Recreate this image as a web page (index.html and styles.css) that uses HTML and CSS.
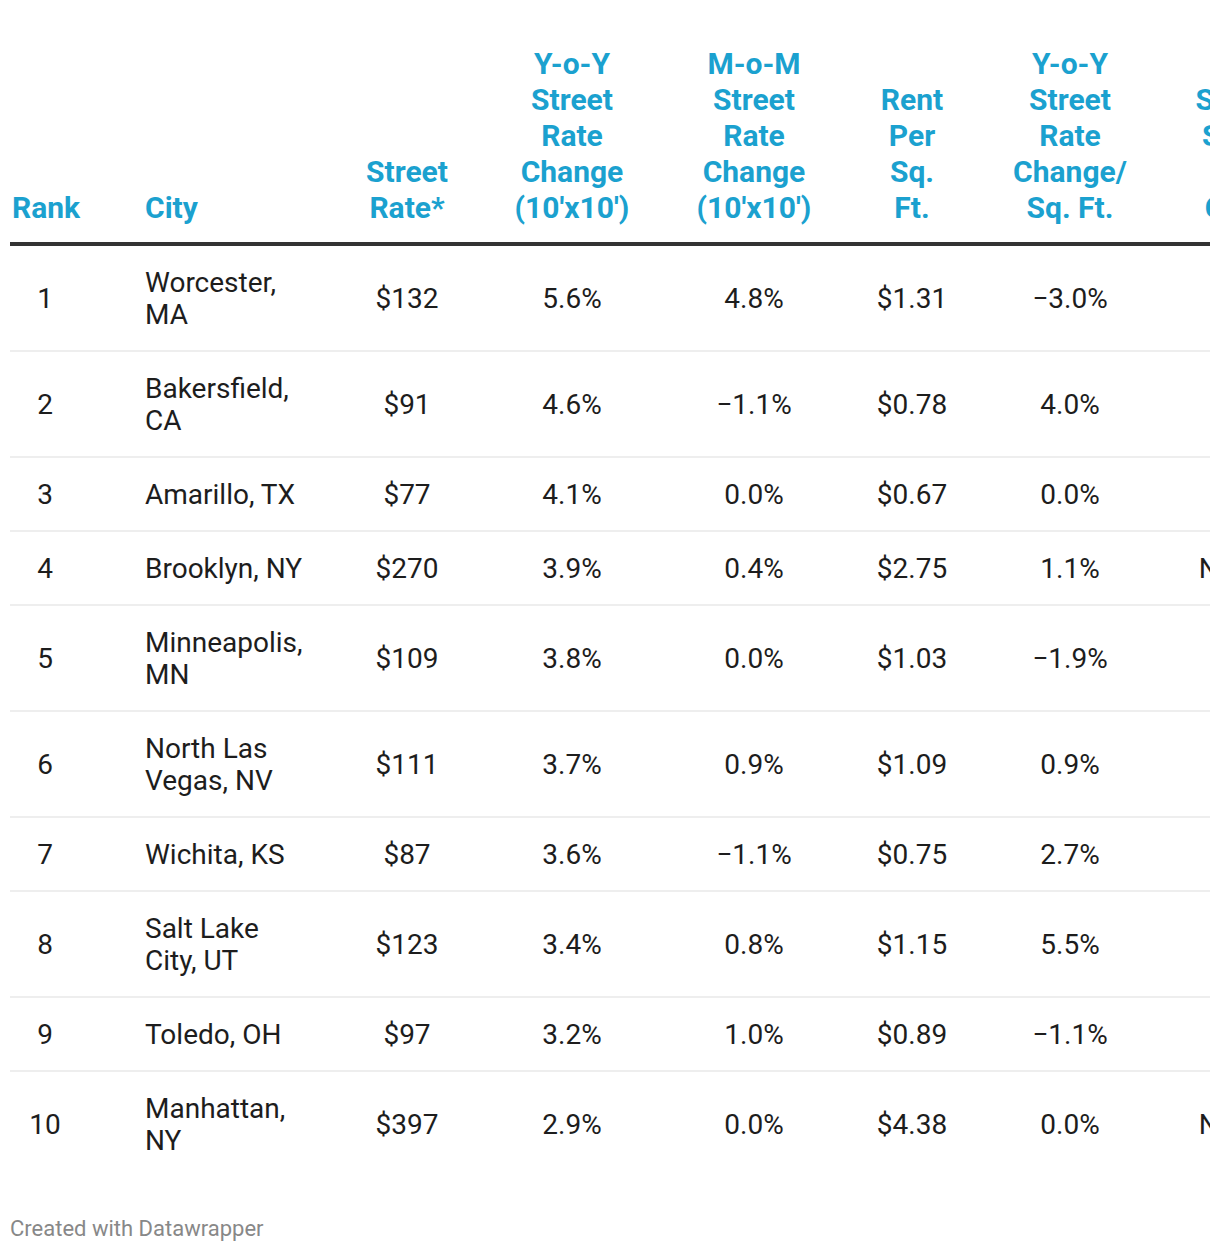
FILE: index.html
```html
<!DOCTYPE html>
<html lang="en">
<head>
<meta charset="utf-8">
<title>Street Rate Table</title>
<link rel="stylesheet" href="styles.css">
</head>
<body>
<div class="chart">
  <div class="table-wrap">
    <table class="data">
      <colgroup>
        <col class="w-rank">
        <col class="w-city">
        <col class="w-street">
        <col class="w-yoy">
        <col class="w-mom">
        <col class="w-rent">
        <col class="w-yoysq">
        <col class="w-supply">
      </colgroup>
      <thead>
        <tr>
          <th class="c-rank">Rank</th>
          <th class="c-city">City</th>
          <th>Street<br>Rate*</th>
          <th>Y-o-Y<br>Street<br>Rate<br>Change<br>(10'x10')</th>
          <th>M-o-M<br>Street<br>Rate<br>Change<br>(10'x10')</th>
          <th>Rent<br>Per<br>Sq.<br>Ft.</th>
          <th>Y-o-Y<br>Street<br>Rate<br>Change/<br>Sq. Ft.</th>
          <th>Storage<br>Supply<br>Per<br>Capita</th>
        </tr>
      </thead>
      <tbody>
        <tr><td class="c-rank">1</td><td class="c-city">Worcester,<br>MA</td><td>$132</td><td>5.6%</td><td>4.8%</td><td>$1.31</td><td>−3.0%</td><td>7.6</td></tr>
        <tr><td class="c-rank">2</td><td class="c-city">Bakersfield,<br>CA</td><td>$91</td><td>4.6%</td><td>−1.1%</td><td>$0.78</td><td>4.0%</td><td>6.2</td></tr>
        <tr><td class="c-rank">3</td><td class="c-city">Amarillo, TX</td><td>$77</td><td>4.1%</td><td>0.0%</td><td>$0.67</td><td>0.0%</td><td>9.8</td></tr>
        <tr><td class="c-rank">4</td><td class="c-city">Brooklyn, NY</td><td>$270</td><td>3.9%</td><td>0.4%</td><td>$2.75</td><td>1.1%</td><td>No data</td></tr>
        <tr><td class="c-rank">5</td><td class="c-city">Minneapolis,<br>MN</td><td>$109</td><td>3.8%</td><td>0.0%</td><td>$1.03</td><td>−1.9%</td><td>6.9</td></tr>
        <tr><td class="c-rank">6</td><td class="c-city">North Las<br>Vegas, NV</td><td>$111</td><td>3.7%</td><td>0.9%</td><td>$1.09</td><td>0.9%</td><td>8.1</td></tr>
        <tr><td class="c-rank">7</td><td class="c-city">Wichita, KS</td><td>$87</td><td>3.6%</td><td>−1.1%</td><td>$0.75</td><td>2.7%</td><td>9.4</td></tr>
        <tr><td class="c-rank">8</td><td class="c-city">Salt Lake<br>City, UT</td><td>$123</td><td>3.4%</td><td>0.8%</td><td>$1.15</td><td>5.5%</td><td>8.7</td></tr>
        <tr><td class="c-rank">9</td><td class="c-city">Toledo, OH</td><td>$97</td><td>3.2%</td><td>1.0%</td><td>$0.89</td><td>−1.1%</td><td>7.3</td></tr>
        <tr><td class="c-rank">10</td><td class="c-city">Manhattan,<br>NY</td><td>$397</td><td>2.9%</td><td>0.0%</td><td>$4.38</td><td>0.0%</td><td>No data</td></tr>
      </tbody>
    </table>
  </div>
  <div class="footer">Created with Datawrapper</div>
</div>
</body>
</html>
```

FILE: styles.css
```css
html, body {
  margin: 0;
  padding: 0;
  background: #ffffff;
}

body {
  font-family: Roboto, "Liberation Sans", Arial, sans-serif;
  color: #1d1d1d;
}

.chart {
  padding: 46px 10px 0 10px;
}

.table-wrap {
  width: 1200px;
  overflow: hidden;
}

.data {
  table-layout: fixed;
  width: 1312px;
  border-collapse: collapse;
  border-spacing: 0;
}

.w-rank { width: 70px; }
.w-city { width: 240px; }
.w-street { width: 174px; }
.w-yoy { width: 156px; }
.w-mom { width: 208px; }
.w-rent { width: 108px; }
.w-yoysq { width: 208px; }
.w-supply { width: 148px; }

.data th {
  font-weight: 700;
  font-size: 30px;
  line-height: 36px;
  color: #1ba1cf;
  text-align: center;
  vertical-align: bottom;
  padding: 0 0 16px 0;
  border-bottom: 4px solid #333333;
  white-space: nowrap;
}

.data td {
  font-size: 28px;
  line-height: 32px;
  text-align: center;
  vertical-align: middle;
  padding: 21px 0 19px 0;
  border-bottom: 2px solid #eeeeee;
  white-space: nowrap;
}

.data tbody tr:last-child td {
  border-bottom: none;
}

.data .c-city {
  text-align: left;
  padding-left: 65px;
}

.data th.c-rank {
  text-align: left;
  padding-left: 2px;
}

.footer {
  margin-top: 40px;
  font-size: 22px;
  line-height: 26px;
  color: #888888;
}
```
